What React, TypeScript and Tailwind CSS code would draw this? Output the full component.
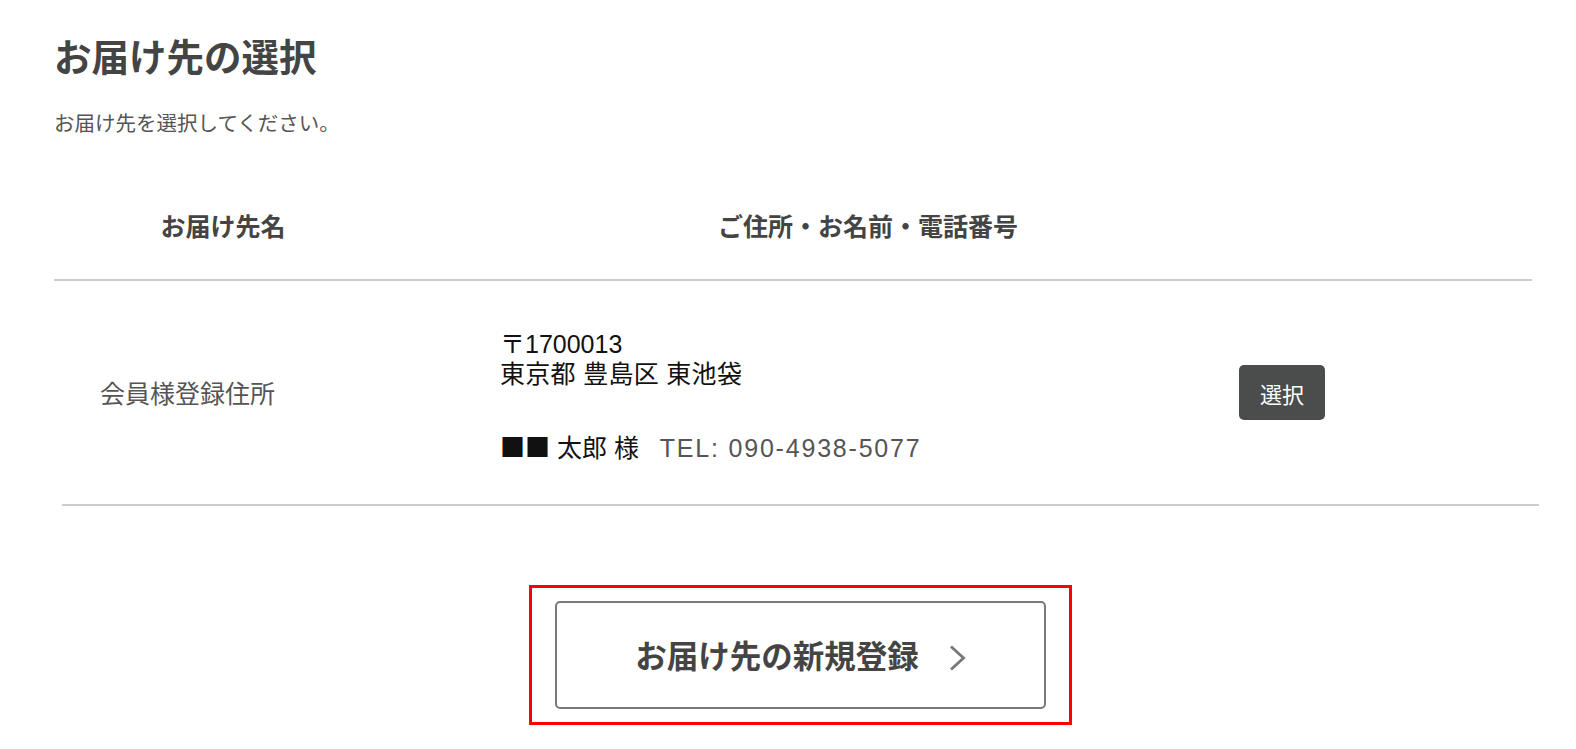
const jp = "font-['Noto_Sans_CJK_JP','Noto_Sans',sans-serif]"

function AddressRow() {
  return (
    <div className="ml-[8px] mr-[-7px] flex h-[225px] items-center border-b-2 border-[#cccccc]">
      <div className="w-[438px] pl-[38px] text-[25px] leading-none text-[#555555]">会員様登録住所</div>
      <div className="w-[739px] pt-[6px] font-['Liberation_Sans','Noto_Sans_CJK_JP',sans-serif] text-[25px] leading-[30px] text-[#111111]">
        <div>〒1700013</div>
        <div className="tracking-[0.3px]">東京都 豊島区 東池袋</div>
        <div className="mt-[42px] whitespace-pre">
          <span className={jp}>■■</span> 太郎 様   <span className="tracking-[1.8px] text-[#555555]">TEL: 090-4938-5077</span>
        </div>
      </div>
      <button className="flex h-[55px] w-[86px] items-center justify-center rounded-[5px] bg-[#4a4d4c] text-[22px] leading-none text-white">
        選択
      </button>
    </div>
  )
}

export default function App() {
  return (
    <div className={`${jp} min-h-[749px] w-[1576px] bg-white pl-[54px] pr-[44px] pt-[36px]`}>
      <h1 className="text-[37.5px] font-bold leading-none text-[#444444]">お届け先の選択</h1>
      <p className="mt-[38px] text-[20.5px] leading-none text-[#555555]">お届け先を選択してください。</p>

      <div className="mt-[81px] flex border-b-2 border-[#cccccc] pb-[41px] text-[25px] font-bold leading-none text-[#444444]">
        <div className="w-[338px] text-center">お届け先名</div>
        <div className="w-[952px] text-center">ご住所・お名前・電話番号</div>
      </div>

      <AddressRow />

      <div className="ml-[15px] flex justify-center pt-[79px]">
        <div className="border-[3px] border-[#ff0000] px-[23px] py-[13px]">
          <button className="flex h-[108px] w-[491px] items-center justify-center gap-[30px] rounded-[5px] border-2 border-[#7a7a7a] bg-white">
            <span className="text-[31.5px] font-bold leading-none text-[#444444]">お届け先の新規登録</span>
            <svg width="17" height="26" viewBox="0 0 17 26" fill="none" className="mt-[6px]">
              <path d="M2 1.5 L14.5 13 L2 24.5" stroke="#777777" strokeWidth="2.8" />
            </svg>
          </button>
        </div>
      </div>
    </div>
  )
}
